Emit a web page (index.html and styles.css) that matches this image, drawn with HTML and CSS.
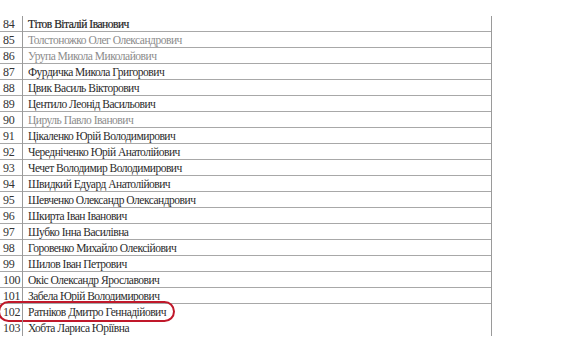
FILE: index.html
```html
<!DOCTYPE html>
<html lang="uk">
<head>
<meta charset="utf-8">
<title>Список</title>
<link rel="stylesheet" href="styles.css">
</head>
<body>
<div class="page">
  <div class="table">
    <div class="row"><div class="num">84</div><div class="name strong">Тітов Віталій Іванович</div></div>
    <div class="row faded"><div class="num">85</div><div class="name">Толстоножко Олег Олександрович</div></div>
    <div class="row faded"><div class="num">86</div><div class="name">Урупа Микола Миколайович</div></div>
    <div class="row"><div class="num">87</div><div class="name">Фурдичка Микола Григорович</div></div>
    <div class="row"><div class="num">88</div><div class="name">Цвик Василь Вікторович</div></div>
    <div class="row"><div class="num">89</div><div class="name">Центило Леонід Васильович</div></div>
    <div class="row faded"><div class="num">90</div><div class="name">Цируль Павло Іванович</div></div>
    <div class="row"><div class="num">91</div><div class="name">Цікаленко Юрій Володимирович</div></div>
    <div class="row"><div class="num">92</div><div class="name">Чередніченко Юрій Анатолійович</div></div>
    <div class="row"><div class="num">93</div><div class="name">Чечет Володимир Володимирович</div></div>
    <div class="row"><div class="num">94</div><div class="name">Швидкий Едуард Анатолійович</div></div>
    <div class="row"><div class="num">95</div><div class="name">Шевченко Олександр Олександрович</div></div>
    <div class="row"><div class="num">96</div><div class="name">Шкирта Іван Іванович</div></div>
    <div class="row"><div class="num">97</div><div class="name">Шубко Інна Василівна</div></div>
    <div class="row"><div class="num">98</div><div class="name">Горовенко Михайло Олексійович</div></div>
    <div class="row"><div class="num">99</div><div class="name">Шилов Іван Петрович</div></div>
    <div class="row"><div class="num">100</div><div class="name">Окіс Олександр Ярославович</div></div>
    <div class="row"><div class="num">101</div><div class="name">Забела Юрій Володимирович</div></div>
    <div class="row marked"><div class="num">102</div><div class="name">Ратніков Дмитро Геннадійович</div><span class="mark"></span></div>
    <div class="row last"><div class="num">103</div><div class="name">Хобта Лариса Юріївна</div></div>
  </div>
</div>
</body>
</html>
```

FILE: styles.css
```css
html, body {
  margin: 0;
  padding: 0;
  background: #ffffff;
}

.page {
  padding-top: 16px;
  width: 584px;
  height: 346px;
  box-sizing: border-box;
  overflow: hidden;
}

.table {
  width: 492px;
  border-right: 1px solid #9a9a9a;
  box-sizing: border-box;
  font-family: "Liberation Serif", "Times New Roman", serif;
  font-size: 11.5px;
  color: #2b2b2b;
}

.row {
  display: grid;
  grid-template-columns: 23px 1fr;
  height: 16px;
  line-height: 16px;
  border-bottom: 1px solid #a8a8a8;
  box-sizing: border-box;
  position: relative;
}

.row.marked,
.row.last {
  border-bottom: none;
}

.num {
  padding-left: 3px;
  border-right: 1px solid #9a9a9a;
  white-space: nowrap;
  color: #333333;
  font-size: 12px;
  letter-spacing: -0.2px;
}

.name {
  padding-left: 5px;
  white-space: nowrap;
  letter-spacing: -0.5px;
}

.strong {
  color: #1e1e1e;
  -webkit-text-stroke: 0.2px #1e1e1e;
}

.faded .name {
  color: #8c8c8c;
}

.mark {
  position: absolute;
  left: -2px;
  top: -3px;
  width: 177px;
  height: 21px;
  border: 2px solid #c0182a;
  border-radius: 11px;
  box-sizing: border-box;
}
```
